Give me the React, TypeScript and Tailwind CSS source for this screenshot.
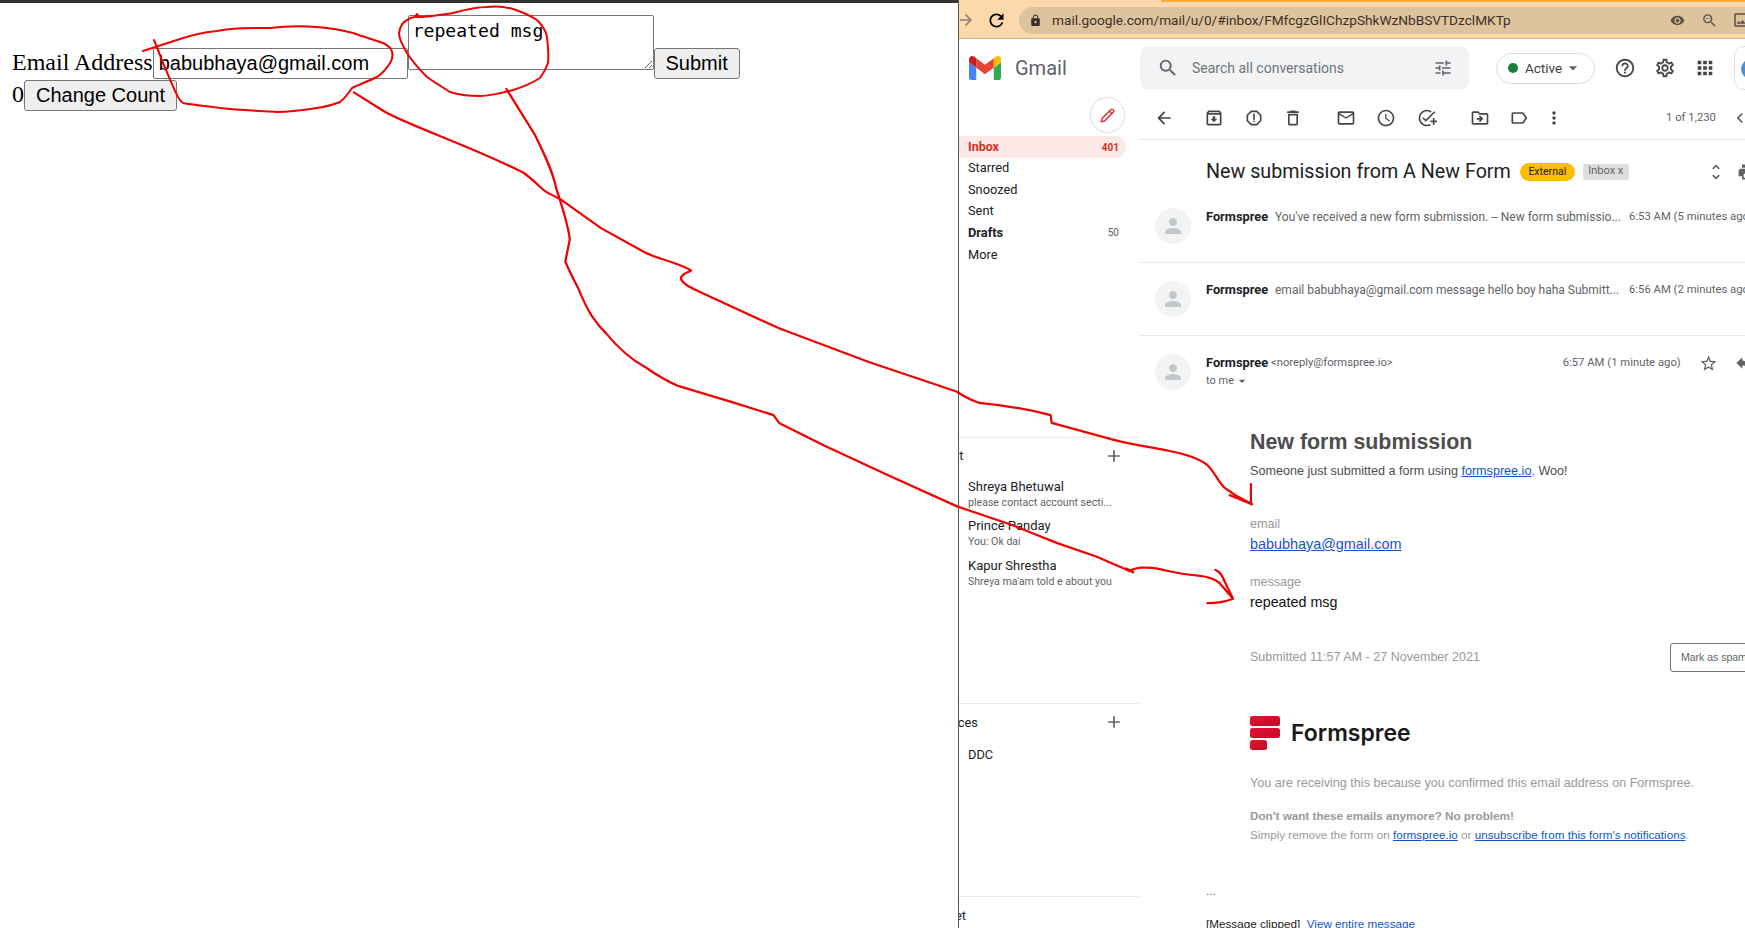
import type { ReactNode } from "react";
import { Pencil } from "lucide-react";
import {
  MdAccessTime,
  MdAdd,
  MdAddTask,
  MdApps,
  MdArrowBack,
  MdArrowDropDown,
  MdChevronLeft,
  MdHelpOutline,
  MdLock,
  MdMoreVert,
  MdOutlineArchive,
  MdOutlineDelete,
  MdOutlineDriveFileMove,
  MdOutlineEmail,
  MdOutlineLabel,
  MdOutlineReport,
  MdOutlineSettings,
  MdPerson,
  MdPrint,
  MdRefresh,
  MdReply,
  MdSearch,
  MdStarBorder,
  MdTune,
  MdUnfoldMore,
  MdZoomOut,
  MdArrowForward,
  MdOutlineInsertPhoto,
  MdRemoveRedEye,
} from "react-icons/md";

const GmailLogo = () => (
  <svg viewBox="52 42 88 66" className="h-[24px] w-[32px]">
    <path fill="#4285f4" d="M58 108h14V74L52 59v43c0 3.32 2.69 6 6 6" />
    <path fill="#34a853" d="M120 108h14c3.32 0 6-2.69 6-6V59l-20 15" />
    <path fill="#fbbc04" d="M120 48v26l20-15v-8c0-7.42-8.47-11.65-14.4-7.2" />
    <path fill="#ea4335" d="M72 74V48l24 18 24-18v26L96 92" />
    <path fill="#c5221f" d="M52 51v8l20 15V48l-5.6-4.2c-5.94-4.45-14.4-.22-14.4 7.2" />
  </svg>
);

const FormspreeLogo = () => (
  <svg viewBox="0 0 30 34" className="h-[34px] w-[30px]">
    <defs>
      <linearGradient id="fs" x1="0" y1="0" x2="1" y2="1">
        <stop offset="0" stopColor="#e8112f" />
        <stop offset="1" stopColor="#bd0c28" />
      </linearGradient>
    </defs>
    <rect width="30" height="10" rx="2.5" fill="url(#fs)" />
    <rect y="12" width="30" height="10" rx="2.5" fill="url(#fs)" />
    <rect y="24" width="17" height="10" rx="2.5" fill="url(#fs)" />
  </svg>
);

const Annotations = () => (
  <svg
    viewBox="0 0 1745 928"
    className="pointer-events-none absolute top-0 left-0 h-[928px] w-[1745px]"
    fill="none"
    stroke="#f00000"
    strokeWidth="2"
    strokeLinejoin="round"
    strokeLinecap="round"
  >
    <path d="M143 51C155 47 168 43 180 39 192 35 205 32 217 31 235 27 252 28 270 28 287 26 302 26 317 27 330 28 342 30 353 33 364 37 375 40 383 43 389 46 392 49 392 52 393 56 392 60 390 63 387 68 383 73 377 77 369 81 360 84 352 88 348 94 344 99 340 102 332 105 325 107 317 108 304 110 290 112 277 112 258 111 238 110 220 108 206 106 193 105 183 103 179 100 178 97 177 95 172 85 168 74 163 63 160 55 157 47 154 40" />
    <path d="M415 17C428 17 440 15 453 13 464 10 476 7 487 7 497 6 506 7 513 9 522 12 531 16 537 20 542 25 546 31 547 37 548 46 549 55 548 63 546 69 543 74 540 78 532 83 523 87 513 90 502 93 491 96 480 96 469 96 459 95 450 92 442 87 434 82 427 77 419 69 412 61 407 53 403 46 399 40 399 33 400 27 403 22 407 20 410 18 412 17 415 17L417 14 419 17" />
    <g transform="scale(1.1129)">
      <path d="M318 83 345 100C365 112 420 130 470 155 480 162 485 168 490 172 495 175 500 177 505 180L540 205 578 226C590 233 605 234 621 243 616 246 611 247 612 251 615 256 620 258 628 262L700 295 780 325 860 352C868 358 875 360 880 362 900 364 925 368 944 373L945 380 1000 395C1020 400 1035 402 1050 405 1065 408 1078 412 1085 418 1092 425 1094 432 1100 438L1110 445 1125 453" />
      <path d="M1124 435V453M1105 445 1125 453" />
      <path d="M455 80 480 120C490 140 497 155 500 170 505 185 510 200 512 215L508 235C512 245 516 252 520 260 528 280 535 290 545 300 555 312 565 322 580 330 590 337 600 343 610 347L660 362 695 373 700 380 740 400 800 428 860 455 910 472 950 488 985 500 1015 513" />
      <path d="M1015 513C1020 510 1030 509 1040 511 1050 513 1060 516 1075 517 1085 518 1092 520 1096 524L1108 538C1100 541 1095 542 1085 542M1092 512C1098 514 1100 522 1103 528L1108 538" />
      <path d="M1012 511 1018 514" strokeWidth="2.4" />
    </g>
  </svg>
);

const SideItem = ({ label, count, active, bold }: { label: string; count?: string; active?: boolean; bold?: boolean }) => (
  <div
    className={
      active
        ? "flex h-[22px] w-[167px] items-center justify-between rounded-r-full bg-[#fce8e6] pr-[7px] pl-[9px] text-[12.5px] font-bold text-[#d93025]"
        : "flex h-[21.6px] w-[167px] items-center justify-between pr-[7px] pb-[2px] pl-[9px] text-[12.8px] text-[#202124]"
    }
  >
    <span className={bold ? "font-bold" : ""}>{label}</span>
    {count && <span className={active ? "text-[10px]" : "text-[10px] text-[#5f6368]"}>{count}</span>}
  </div>
);

const Contact = ({ name, text }: { name: string; text: string }) => (
  <div className="h-[39.5px] pl-[9px] whitespace-nowrap">
    <div className="text-[13px] leading-[16px] text-[#202124]">{name}</div>
    <div className="text-[10.6px] leading-[15px] text-[#5f6368]">{text}</div>
  </div>
);

const SectionHead = ({ label, shift }: { label: string; shift: string }) => (
  <div className="flex h-[38px] items-center justify-between pr-[15px] pb-[2px] text-[#202124]">
    <span className={`text-[12.8px] ${shift}`}>{label}</span>
    <MdAdd className="text-[20px] text-[#5f6368]" />
  </div>
);

const Avatar = () => (
  <div className="flex h-[36px] w-[36px] shrink-0 items-center justify-center rounded-full bg-[#f1f3f4]">
    <MdPerson className="text-[24px] text-[#c4c7c9]" />
  </div>
);

const CollapsedRow = ({ text, time }: { text: string; time: string }) => (
  <div className="flex h-[73px] items-start border-b border-[#e8eaed] pt-[18px] pl-[16px] whitespace-nowrap">
    <Avatar />
    <div className="ml-[15px] flex items-center text-[12px] leading-[18px]">
      <span className="w-[69px] text-[12.8px] font-bold text-[#202124]">Formspree</span>
      <span className="w-[354px] text-[#5f6368]">{text}</span>
      <span className="text-[11.3px] text-[#5f6368]">{time}</span>
    </div>
  </div>
);

const TbIcon = ({ className, children }: { className: string; children: ReactNode }) => (
  <span className={`flex shrink-0 text-[20px] text-[#444746] ${className}`}>{children}</span>
);

export default function App() {
  return (
    <div className="relative flex h-[928px] w-[1745px] overflow-hidden bg-white">
      {/* left: the little test page */}
      <div className="h-full w-[959px] shrink-0 border-r border-[#555] font-['Liberation_Serif',serif] text-[24px] text-black">
        <div className="h-[3px] bg-[#333]" />
        <div className="pt-[12px] pl-[12px] leading-[27px]">
          <div className="h-[65px] whitespace-nowrap">
            Email Address
            <input
              readOnly
              value="babubhaya@gmail.com"
              className="h-[31px] w-[255px] rounded-[2px] border border-[#767676] px-[5px] font-['Liberation_Sans',sans-serif] text-[20px]"
            />
            <textarea
              readOnly
              value="repeated msg"
              className="h-[55px] w-[246px] rounded-[2px] border border-[#767676] px-[4px] pt-[4px] font-['DejaVu_Sans_Mono',monospace] text-[18.1px] leading-[22px]"
            />
            <button className="h-[31px] w-[86px] rounded-[3px] border border-[#767676] bg-[#efefef] font-['Liberation_Sans',sans-serif] text-[20px]">
              Submit
            </button>
          </div>
          <div className="whitespace-nowrap">
            0
            <button className="h-[31px] w-[153px] rounded-[3px] border border-[#767676] bg-[#efefef] font-['Liberation_Sans',sans-serif] text-[20px]">
              Change Count
            </button>
          </div>
        </div>
      </div>

      {/* right: gmail window */}
      <div className="flex h-full min-w-0 flex-1 flex-col overflow-hidden font-['Roboto',sans-serif]">
        <div className="h-[2px] shrink-0 bg-[#fcd9ad] pl-[202px]">
          <div className="h-full bg-[#f9a93f]" />
        </div>
        <div className="flex h-[37px] shrink-0 items-center border-b border-[#cfb795] bg-[#fcd9ad]">
          <MdArrowForward className="-ml-[2px] shrink-0 text-[18px] text-[#8a7a66]" />
          <MdRefresh className="ml-[11px] shrink-0 text-[21px] text-black" />
          <div className="ml-[12px] flex h-[27px] flex-1 items-center rounded-l-full bg-[#dec39f] pl-[10px] text-[#3c3126]">
            <MdLock className="shrink-0 text-[13px]" />
            <span className="ml-[10px] w-[618px] shrink-0 text-[13.65px] whitespace-nowrap">
              mail.google.com/mail/u/0/#inbox/FMfcgzGlIChzpShkWzNbBSVTDzclMKTp
            </span>
            <MdRemoveRedEye className="shrink-0 text-[15px] text-[#5c5246]" />
            <MdZoomOut className="ml-[16px] shrink-0 text-[17px] text-[#5c5246]" />
            <MdOutlineInsertPhoto className="ml-[14px] shrink-0 text-[18px] text-[#5c5246]" />
          </div>
        </div>

        <div className="flex h-[58px] shrink-0 items-center">
          <div className="flex w-[181px] shrink-0 items-center pl-[10px]">
            <GmailLogo />
            <span className="ml-[14px] text-[20px] text-[#5f6368]">Gmail</span>
          </div>
          <div className="flex h-[44px] w-[329px] shrink-0 items-center rounded-[8px] bg-[#f1f3f4] pl-[17px] text-[#70757a]">
            <MdSearch className="text-[22px] text-[#5f6368]" />
            <span className="ml-[13px] w-[241px] pt-[1px] text-[14px]">Search all conversations</span>
            <MdTune className="text-[20px] text-[#5f6368]" />
          </div>
          <div className="ml-[27px] flex h-[31px] w-[99px] shrink-0 items-center rounded-full border border-[#dadce0] pl-[11px] text-[13.5px] text-[#3c4043]">
            <span className="h-[10px] w-[10px] rounded-full bg-[#188038]" />
            <span className="ml-[7px]">Active</span>
            <MdArrowDropDown className="ml-[1px] text-[20px] text-[#5f6368]" />
          </div>
          <MdHelpOutline className="ml-[19px] shrink-0 text-[22px] text-[#444746]" />
          <MdOutlineSettings className="ml-[18px] shrink-0 text-[22px] text-[#444746]" />
          <MdApps className="ml-[18px] shrink-0 text-[22px] text-[#444746]" />
          <div className="ml-[18px] h-[44px] w-[40px] shrink-0 rounded-l-[10px] border border-[#dadce0] pt-[12px] pl-[6px]">
            <div className="h-[20px] w-[20px] rounded-full bg-[#4a90d9]" />
          </div>
        </div>

        <div className="flex min-h-0 flex-1">
          {/* sidebar */}
          <div className="w-[180px] shrink-0">
            <div className="h-[39px] pl-[131px]">
              <div className="flex h-[36px] w-[35px] items-center justify-center rounded-full border border-[#dadce0]">
                <Pencil size={15} strokeWidth={2.4} className="text-[#e0393e]" />
              </div>
            </div>
            <SideItem label="Inbox" count="401" active />
            <SideItem label="Starred" />
            <SideItem label="Snoozed" />
            <SideItem label="Sent" />
            <SideItem label="Drafts" count="50" bold />
            <SideItem label="More" />
            <div className="mt-[171px] border-t border-[#e8eaed]" />
            <SectionHead label="Chat" shift="-ml-[22px]" />
            <div className="mt-[3px]">
              <Contact name="Shreya Bhetuwal" text="please contact account secti..." />
              <Contact name="Prince Panday" text="You: Ok dai" />
              <Contact name="Kapur Shrestha" text="Shreya ma'am told e about you" />
            </div>
            <div className="mt-[106px] border-t border-[#e8eaed]" />
            <SectionHead label="Spaces" shift="-ml-[23px]" />
            <div className="mt-[3px] pl-[9px] text-[12.8px] leading-[20px] text-[#202124]">DDC</div>
            <div className="mt-[131px] border-t border-[#e8eaed]" />
            <div className="-ml-[22px] pt-[9px] text-[12.8px] text-[#202124]">Meet</div>
          </div>

          {/* conversation */}
          <div className="w-[606px] shrink-0">
            <div className="flex h-[43px] items-center border-b border-[#e8eaed] whitespace-nowrap">
              <TbIcon className="ml-[15px]"><MdArrowBack /></TbIcon>
              <TbIcon className="ml-[30px]"><MdOutlineArchive /></TbIcon>
              <TbIcon className="ml-[20px]"><MdOutlineReport /></TbIcon>
              <TbIcon className="ml-[19px]"><MdOutlineDelete /></TbIcon>
              <div className="ml-[16px] h-[20px] w-px bg-[#dadce0]" />
              <TbIcon className="ml-[17px]"><MdOutlineEmail /></TbIcon>
              <TbIcon className="ml-[20px]"><MdAccessTime /></TbIcon>
              <TbIcon className="ml-[21px]"><MdAddTask /></TbIcon>
              <div className="ml-[15px] h-[20px] w-px bg-[#dadce0]" />
              <TbIcon className="ml-[18px]"><MdOutlineDriveFileMove /></TbIcon>
              <TbIcon className="ml-[19px]"><MdOutlineLabel /></TbIcon>
              <TbIcon className="ml-[15px]"><MdMoreVert /></TbIcon>
              <span className="ml-[102px] text-[11.3px] text-[#5f6368]">1 of 1,230</span>
              <MdChevronLeft className="ml-[14px] shrink-0 text-[20px] text-[#5f6368]" />
            </div>
            <div className="flex h-[50px] items-center pt-[13px] pl-[67px] whitespace-nowrap">
              <span className="text-[19.7px] text-[#202124]">New submission from A New Form</span>
              <span className="ml-[9px] flex h-[18px] w-[55px] shrink-0 items-center justify-center rounded-full bg-[#fbbc04] text-[10.5px] text-[#202124]">External</span>
              <span className="ml-[8px] flex h-[16px] w-[46px] shrink-0 items-center justify-center rounded-[2px] bg-[#dddddd] text-[11px] text-[#666]">Inbox x</span>
              <MdUnfoldMore className="ml-[77px] shrink-0 text-[20px] text-[#5f6368]" />
              <MdPrint className="ml-[11px] shrink-0 text-[20px] text-[#5f6368]" />
            </div>
            <CollapsedRow text="You've received a new form submission. -- New form submissio..." time="6:53 AM (5 minutes ago)" />
            <CollapsedRow text="email babubhaya@gmail.com message hello boy haha Submitt..." time="6:56 AM (2 minutes ago)" />

            <div className="flex pt-[18px] pl-[16px] whitespace-nowrap">
              <Avatar />
              <div className="ml-[15px]">
                <div className="flex h-[18px] items-center">
                  <span className="text-[12.8px] font-bold text-[#202124]">Formspree</span>
                  <span className="ml-[3px] text-[11.2px] text-[#5f6368]">&lt;noreply@formspree.io&gt;</span>
                  <span className="ml-[170px] text-[11.3px] text-[#5f6368]">6:57 AM (1 minute ago)</span>
                  <MdStarBorder className="ml-[18px] shrink-0 text-[19px] text-[#5f6368]" />
                  <MdReply className="ml-[16px] shrink-0 text-[20px] text-[#5f6368]" />
                </div>
                <div className="flex h-[18px] items-center text-[11px] text-[#5f6368]">
                  to me
                  <MdArrowDropDown className="text-[16px]" />
                </div>
              </div>
            </div>

            <div className="pt-[39px] pl-[111px] font-['Liberation_Sans',sans-serif]">
              <h1 className="text-[21.4px] leading-[26px] font-bold text-[#4d4d4d]">New form submission</h1>
              <p className="mt-[7px] text-[12.6px] leading-[18px] text-[#4d4d4d]">
                Someone just submitted a form using <a className="text-[#1155cc] underline">formspree.io</a>. Woo!
              </p>
              <p className="mt-[35px] text-[12.6px] leading-[18px] text-[#999]">email</p>
              <a className="mt-[2px] block text-[14.4px] leading-[18px] text-[#1155cc] underline">babubhaya@gmail.com</a>
              <p className="mt-[20px] text-[12.6px] leading-[18px] text-[#999]">message</p>
              <p className="mt-[2px] text-[14.3px] leading-[18px] text-[#111]">repeated msg</p>
              <div className="mt-[32px] flex h-[29px] items-center whitespace-nowrap">
                <span className="text-[12.55px] text-[#999]">Submitted 11:57 AM - 27 November 2021</span>
                <span className="ml-[190px] flex h-[29px] w-[110px] shrink-0 items-center rounded-[3px] border border-[#777] pl-[10px] text-[10.5px] text-[#666]">Mark as spam</span>
              </div>
              <div className="mt-[44px] flex h-[34px] items-center">
                <FormspreeLogo />
                <span className="ml-[11px] font-['Inter',sans-serif] text-[23px] font-semibold text-[#1a1a1a]">Formspree</span>
              </div>
              <p className="mt-[24px] text-[12.6px] leading-[18px] whitespace-nowrap text-[#999]">
                You are receiving this because you confirmed this email address on Formspree.
              </p>
              <p className="mt-[15px] text-[11.7px] leading-[18px] font-bold text-[#999]">Don't want these emails anymore? No problem!</p>
              <p className="mt-[1px] text-[11.7px] leading-[18px] whitespace-nowrap text-[#999]">
                Simply remove the form on <a className="text-[#1155cc] underline">formspree.io</a> or{" "}
                <a className="text-[#1155cc] underline">unsubscribe from this form's notifications</a>.
              </p>
            </div>
            <div className="pt-[38px] pl-[67px] font-['Liberation_Sans',sans-serif] text-[11.7px] leading-[18px] text-[#222]">
              <p className="text-[#5f6368]">...</p>
              <p className="mt-[15px] whitespace-nowrap">
                [Message clipped]&nbsp; <a className="text-[#1155cc]">View entire message</a>
              </p>
            </div>
          </div>
        </div>
      </div>

      <Annotations />
    </div>
  );
}
